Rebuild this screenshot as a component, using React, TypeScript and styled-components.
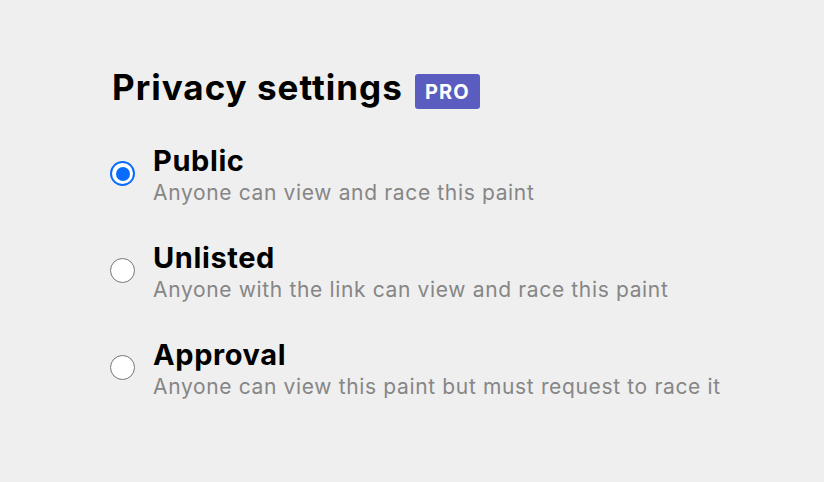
import * as React from 'react'
import styled, { createGlobalStyle } from 'styled-components'

const GlobalStyle = createGlobalStyle`
  html, body {
    margin: 0;
    padding: 0;
    background: #efefef;
  }
  body {
    font-family: Inter, 'Liberation Sans', sans-serif;
  }
`

const Page = styled.div`
  width: 824px;
  height: 482px;
  box-sizing: border-box;
  padding: 65px 0 0 110px;
  display: flex;
  flex-direction: column;
`
const TitleRow = styled.div`
  display: flex;
  align-items: flex-start;
  gap: 12px;
  margin-left: 2px;
`
const Title = styled.h1`
  margin: 0;
  font-size: 35px;
  line-height: 44px;
  font-weight: 700;
  letter-spacing: 1px;
  color: #000;
`
const ProBadge = styled.span`
  display: inline-flex;
  align-items: center;
  justify-content: center;
  width: 65px;
  height: 35px;
  margin-top: 9px;
  border-radius: 3px;
  background: #5a5dbf;
  color: #fff;
  font-size: 20px;
  font-weight: 700;
  letter-spacing: 1px;
`
const Options = styled.div`
  display: flex;
  flex-direction: column;
  gap: 33px;
  margin-top: 35px;
`
const Option = styled.label`
  display: flex;
  align-items: flex-start;
  gap: 18px;
  cursor: pointer;
`
const Radio = styled.span<{ $checked?: boolean }>`
  flex: none;
  width: 25px;
  height: 25px;
  margin-top: 17px;
  box-sizing: border-box;
  border-radius: 50%;
  background: #fff;
  border: ${p => (p.$checked ? '2.5px solid #0a6cff' : '1.75px solid #767676')};
  display: flex;
  align-items: center;
  justify-content: center;
  &::after {
    content: '';
    display: ${p => (p.$checked ? 'block' : 'none')};
    width: 14px;
    height: 14px;
    border-radius: 50%;
    background: #0a6cff;
  }
`
const OptionText = styled.div`
  display: flex;
  flex-direction: column;
`
const OptionTitle = styled.span`
  font-size: 29px;
  line-height: 34px;
  font-weight: 700;
  letter-spacing: 0.6px;
  color: #000;
`
const OptionDesc = styled.span`
  font-size: 21px;
  line-height: 30px;
  letter-spacing: 0.65px;
  color: #868686;
`

const options = [
  { key: 'public', title: 'Public', desc: 'Anyone can view and race this paint' },
  { key: 'unlisted', title: 'Unlisted', desc: 'Anyone with the link can view and race this paint' },
  { key: 'approval', title: 'Approval', desc: 'Anyone can view this paint but must request to race it' },
]

const App = () => {
  const [selected, setSelected] = React.useState('public')

  return (
    <Page>
      <GlobalStyle />
      <TitleRow>
        <Title>Privacy settings</Title>
        <ProBadge>PRO</ProBadge>
      </TitleRow>
      <Options>
        {options.map(o => (
          <Option key={o.key} onClick={() => setSelected(o.key)}>
            <Radio $checked={selected === o.key} />
            <OptionText>
              <OptionTitle>{o.title}</OptionTitle>
              <OptionDesc>{o.desc}</OptionDesc>
            </OptionText>
          </Option>
        ))}
      </Options>
    </Page>
  )
}

export default App
